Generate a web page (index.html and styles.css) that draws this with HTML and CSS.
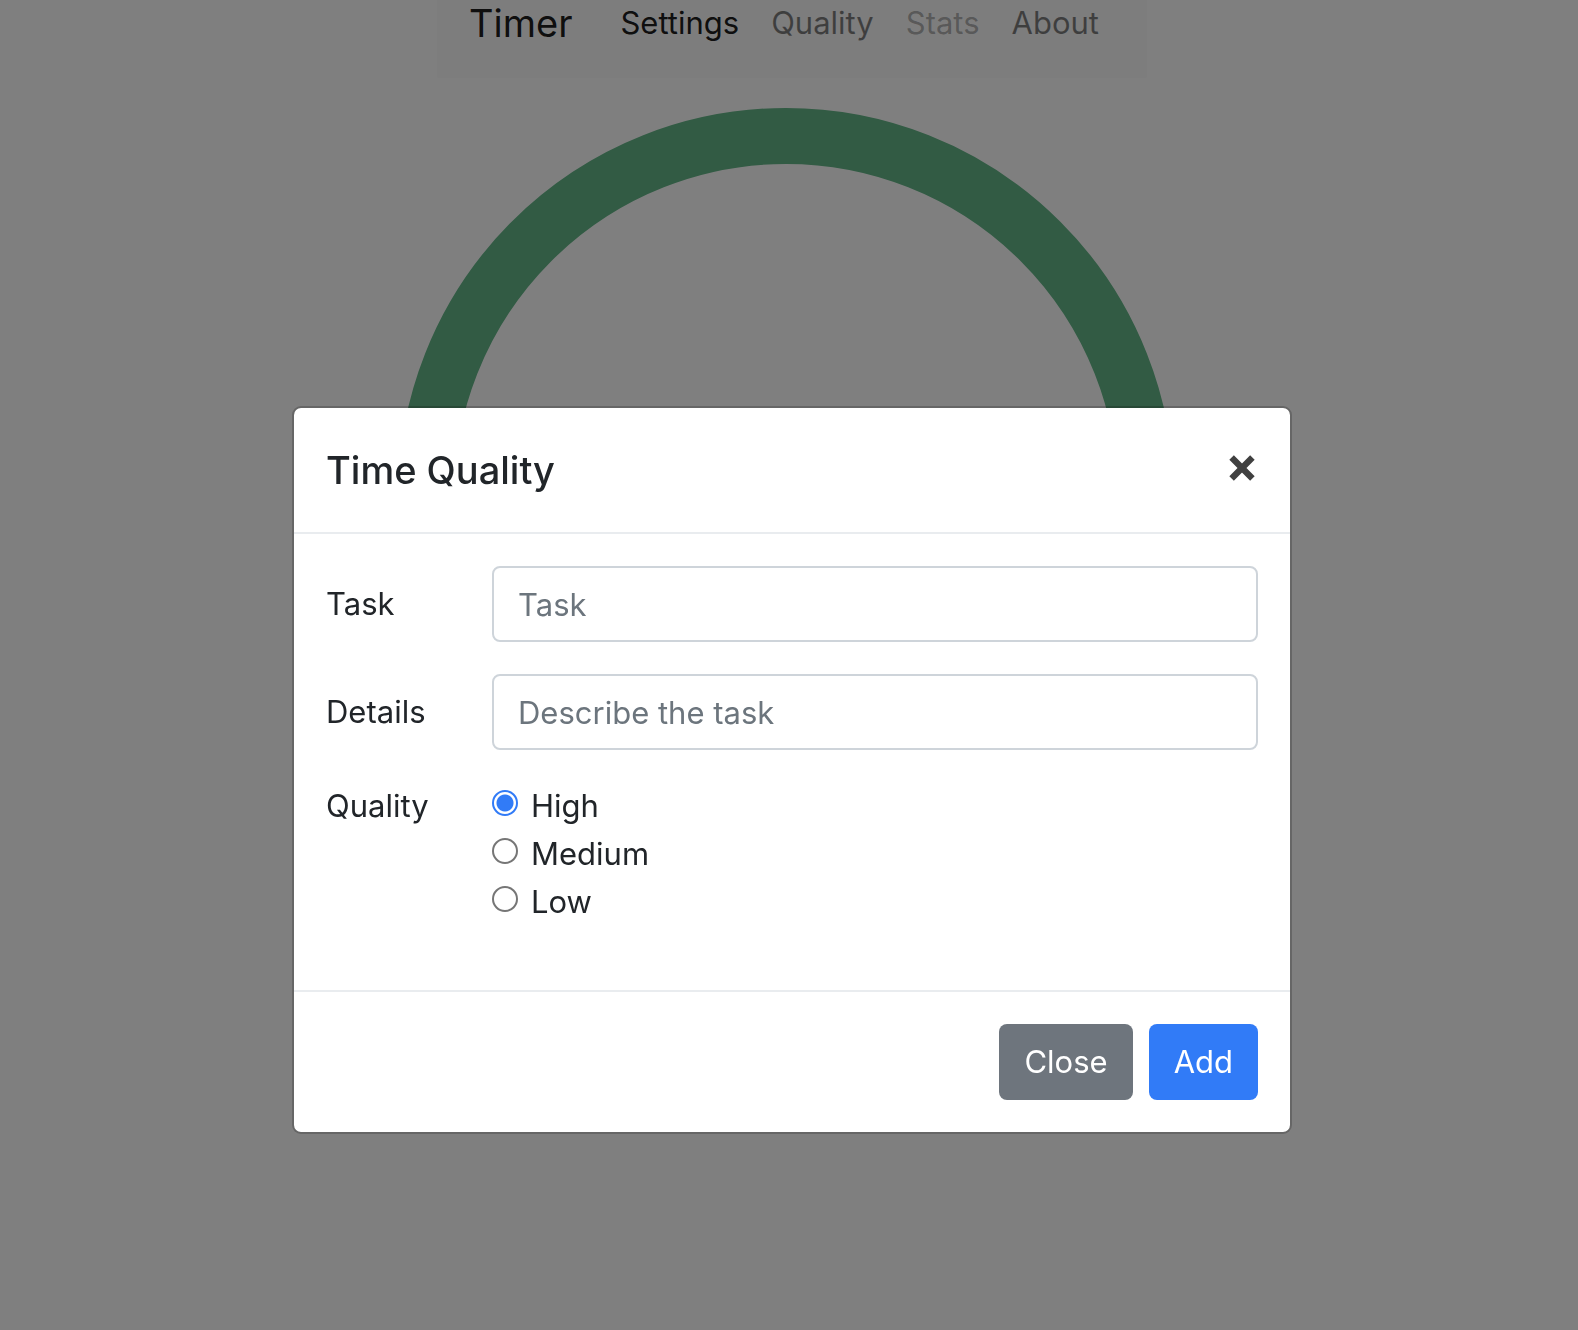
FILE: index.html
```html
<!DOCTYPE html>
<html lang="en">
<head>
  <meta charset="utf-8">
  <meta name="viewport" content="width=device-width, initial-scale=1">
  <title>Timer</title>
  <link rel="stylesheet" href="styles.css">
</head>
<body>
  <div class="page">
    <nav class="navbar">
      <a class="brand" href="#">Timer</a>
      <a class="nav-link active" href="#settings">Settings</a>
      <a class="nav-link" href="#quality">Quality</a>
      <a class="nav-link disabled" href="#stats" aria-disabled="true">Stats</a>
      <a class="nav-link" href="#about">About</a>
    </nav>
    <main class="clock">
      <svg class="ring" viewBox="0 0 776 776" aria-hidden="true">
        <circle cx="388" cy="388" r="360" fill="none" stroke="#64b688" stroke-width="56"/>
      </svg>
    </main>
  </div>

  <div class="backdrop">
    <form class="modal" role="dialog" aria-labelledby="modal-title">
      <header class="modal-header">
        <h1 class="modal-title" id="modal-title">Time Quality</h1>
        <button class="dismiss" type="button" aria-label="Dismiss">
          <svg class="dismiss-icon" viewBox="0 0 26 26" aria-hidden="true">
            <path d="M2.6 2.6L23.4 23.4M23.4 2.6L2.6 23.4" fill="none" stroke="#404040" stroke-width="6.4"/>
          </svg>
        </button>
      </header>
      <div class="modal-body">
        <div class="field">
          <label class="label" for="task">Task</label>
          <input class="input" id="task" type="text" placeholder="Task">
        </div>
        <div class="field">
          <label class="label" for="details">Details</label>
          <input class="input" id="details" type="text" placeholder="Describe the task">
        </div>
        <div class="field top" role="radiogroup" aria-labelledby="quality-label">
          <span class="label" id="quality-label">Quality</span>
          <div class="options">
            <label class="option"><input class="radio" type="radio" name="quality" checked>High</label>
            <label class="option"><input class="radio" type="radio" name="quality">Medium</label>
            <label class="option"><input class="radio" type="radio" name="quality">Low</label>
          </div>
        </div>
      </div>
      <footer class="modal-footer">
        <button class="button secondary" type="button">Close</button>
        <button class="button primary" type="button">Add</button>
      </footer>
    </form>
  </div>
</body>
</html>
```
FILE: styles.css
```css
* {
  box-sizing: border-box;
}

body {
  margin: 0;
  background: #fff;
  color: #212529;
  font-family: Inter, "Liberation Sans", sans-serif;
  font-size: 31px;
  line-height: 48px;
}

.page {
  display: flex;
  flex-direction: column;
  align-items: center;
  gap: 30px;
}

.navbar {
  display: flex;
  align-items: center;
  margin-left: 6px;
  padding: 0 32px 32px;
  border-radius: 0 0 2px 2px;
  background: #fafafa;
  line-height: 46px;
}

.brand {
  margin-right: 32px;
  color: rgba(0, 0, 0, 0.9);
  font-size: 38px;
  text-decoration: none;
}

.nav-link {
  padding: 0 16px;
  color: rgba(0, 0, 0, 0.5);
  text-decoration: none;
}

.nav-link.active {
  color: rgba(0, 0, 0, 0.9);
}

.nav-link.disabled {
  color: rgba(0, 0, 0, 0.3);
}

.clock {
  display: flex;
  justify-content: center;
  width: 100%;
  padding-right: 6px;
}

.ring {
  width: 100%;
  max-width: 776px;
}

.backdrop {
  position: fixed;
  inset: 0;
  display: flex;
  justify-content: center;
  align-items: flex-start;
  padding: 406px 0 32px 6px;
  overflow: auto;
  background: rgba(0, 0, 0, 0.5);
}

.modal {
  width: 100%;
  max-width: 1000px;
  border: 2px solid rgba(0, 0, 0, 0.2);
  border-radius: 9px;
  background: #fff;
  background-clip: padding-box;
}

.modal-header {
  display: flex;
  justify-content: space-between;
  align-items: center;
  padding: 32px;
  border-bottom: 2px solid #e9ecef;
}

.modal-title {
  margin: 0;
  font-size: 38px;
  font-weight: 500;
  line-height: 60px;
}

.dismiss {
  display: flex;
  padding: 0 3px 4px;
  border: 0;
  background: none;
}

.dismiss-icon {
  width: 26px;
  height: 26px;
}

.modal-body {
  padding: 32px 32px 64px;
  display: grid;
  gap: 32px;
}

.field {
  display: grid;
  grid-template-columns: 166px 1fr;
  align-items: center;
}

.field.top {
  align-items: start;
}

.input {
  width: 100%;
  height: 76px;
  padding: 12px 24px;
  border: 2px solid #ced4da;
  border-radius: 8px;
  background: #fff;
  color: #495057;
  font: inherit;
}

.input::placeholder {
  color: #6c757d;
  opacity: 1;
}

.options {
  display: flex;
  flex-direction: column;
  align-items: flex-start;
}

.option {
  display: flex;
  align-items: flex-start;
  gap: 13px;
}

.radio {
  appearance: none;
  width: 26px;
  height: 26px;
  margin: 8px 0 0;
  border: 2px solid #767676;
  border-radius: 50%;
  background: #fff;
}

.radio:checked {
  border-color: #317bf7;
  background: radial-gradient(circle, #317bf7 8px, #fff 9px);
}

.modal-footer {
  display: flex;
  justify-content: flex-end;
  gap: 16px;
  padding: 32px;
  border-top: 2px solid #e9ecef;
}

.button {
  height: 76px;
  padding: 0 25px;
  border: 0;
  border-radius: 8px;
  color: #fff;
  font: inherit;
}

.secondary {
  background: #6e757d;
}

.primary {
  background: #317bf7;
}
```
